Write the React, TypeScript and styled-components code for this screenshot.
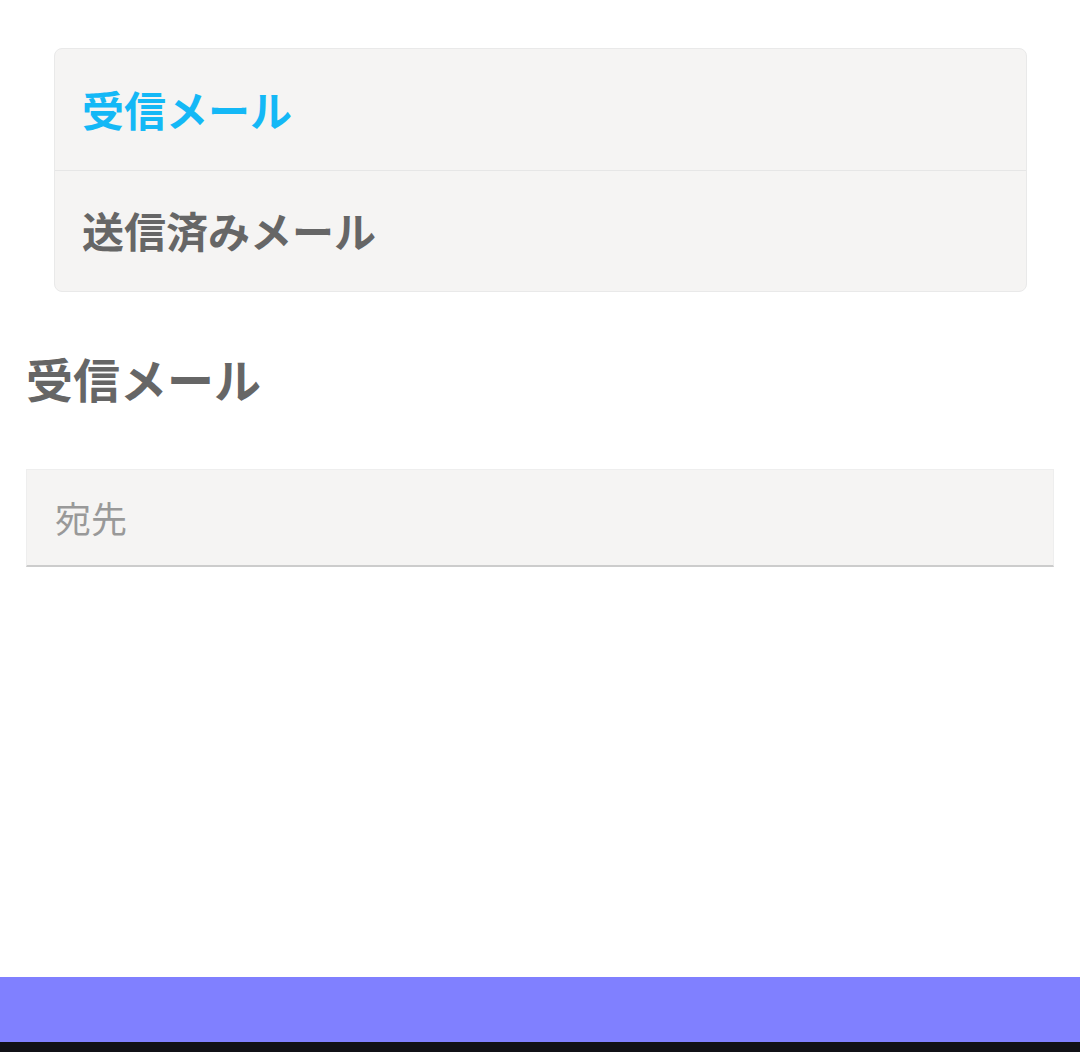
import React from "react";
import styled, { createGlobalStyle } from "styled-components";

const Global = createGlobalStyle`
  html, body { margin: 0; padding: 0; background: #fff; }
  body { font-family: "Noto Sans CJK JP", "Noto Sans", sans-serif; }
  * { box-sizing: border-box; }
`;

const Page = styled.div`
  min-height: 100vh;
  display: flex;
  flex-direction: column;
`;

const Main = styled.main`
  flex: 1;
  padding: 48px 26px 0;
`;

const Menu = styled.nav`
  margin: 0 27px 0 28px;
  background: #f5f4f3;
  border: 1px solid #e9e9e9;
  border-radius: 8px;
  overflow: hidden;
`;

const MenuItem = styled.a<{ $active?: boolean }>`
  display: flex;
  align-items: center;
  height: 121px;
  padding: 0 0 3px 27px;
  font-size: 42px;
  font-weight: 700;
  color: ${(p) => (p.$active ? "#14b8f6" : "#666666")};
  text-decoration: none;
  & + & {
    border-top: 1px solid #e6e6e6;
  }
`;

const Heading = styled.h2`
  margin: 50px 0 0;
  line-height: 72px;
  font-size: 47px;
  font-weight: 700;
  color: #666666;
`;

const Field = styled.input`
  display: block;
  width: 100%;
  margin-top: 55px;
  height: 98px;
  padding: 0 0 2px 28px;
  background: #f5f4f3;
  border: 1px solid #eeeeee;
  border-bottom: 2px solid #cccccc;
  font-family: "Noto Sans CJK JP", "Noto Sans", sans-serif;
  font-size: 36px;
  color: #666;
  outline: none;
  &::placeholder {
    color: #999999;
  }
`;

const Footer = styled.footer`
  height: 65px;
  background: #8080ff;
`;

const Edge = styled.div`
  height: 10px;
  background: #111116;
`;

export default function App() {
  return (
    <Page>
      <Global />
      <Main>
        <Menu>
          <MenuItem $active>受信メール</MenuItem>
          <MenuItem>送信済みメール</MenuItem>
        </Menu>
        <Heading>受信メール</Heading>
        <Field placeholder="宛先" />
      </Main>
      <Footer />
      <Edge />
    </Page>
  );
}
